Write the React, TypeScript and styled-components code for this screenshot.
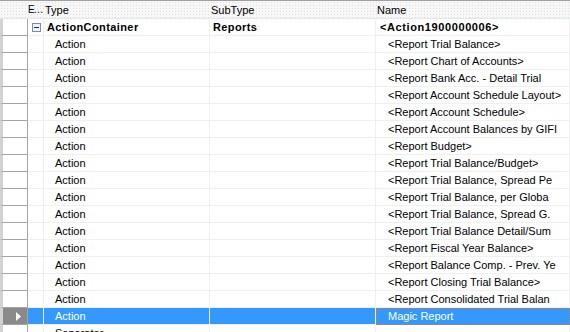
import React from 'react'
import styled, { createGlobalStyle } from 'styled-components'

const GlobalStyle = createGlobalStyle`
  html, body { margin: 0; padding: 0; background: #fff; }
  body {
    font-family: "Liberation Sans", Arial, sans-serif;
    font-size: 11px;
    color: #000;
  }
`

const COLS = '28px 16px 166px 166px 1fr'

const Grid = styled.div`
  width: 570px;
  height: 332px;
  overflow: hidden;
  box-sizing: border-box;
  border-top: 1px solid #a0a0a0;
  background: #fff;
`

const HeaderRow = styled.div`
  display: grid;
  grid-template-columns: ${COLS};
  height: 18px;
  box-sizing: border-box;
  background-color: #f7f7f7;
  background-image: radial-gradient(circle, #e0e0e0 0.7px, transparent 0.9px);
  background-size: 3px 3px;
  border-bottom: 1px solid #e2e8ee;
`

const HeaderCell = styled.div<{ $tight?: boolean }>`
  padding-left: ${p => (p.$tight ? 0 : 1)}px;
  line-height: 18px;
  white-space: nowrap;
  overflow: hidden;
  color: #000;
  font-size: ${p => (p.$tight ? 10 : 11)}px;
  letter-spacing: ${p => (p.$tight ? -1.2 : 0)}px;
`

const Row = styled.div<{ $selected?: boolean }>`
  display: grid;
  grid-template-columns: ${COLS};
  height: 17px;
  background: ${p => (p.$selected ? '#3399ff' : '#fff')};
  color: ${p => (p.$selected ? '#fff' : '#000')};
`

const RowHead = styled.div<{ $current?: boolean }>`
  box-sizing: border-box;
  border-left: 3px solid #d2d2d2;
  border-right: 1px solid #a5a5a5;
  border-bottom: 1px solid #a5a5a5;
  background: ${p => (p.$current ? '#8a8a8a' : '#fff')};
  display: flex;
  align-items: center;
  padding-left: 13px;
`

const Cell = styled.div<{ $indent?: number; $bold?: boolean; $focus?: boolean; $spacing?: number }>`
  box-sizing: border-box;
  border-right: 1px solid #f0f0f0;
  border-bottom: 1px solid #f0f0f0;
  ${p => (p.$focus ? 'border: 1px dotted #ee7411;' : '')}
  padding-left: ${p => p.$indent ?? 3}px;
  line-height: ${p => (p.$focus ? 15 : 16)}px;
  font-weight: ${p => (p.$bold ? 700 : 400)};
  letter-spacing: ${p => p.$spacing ?? 0}px;
  white-space: nowrap;
  overflow: hidden;
  display: flex;
  align-items: center;
`

const Toggle = styled.svg`
  display: block;
  margin-left: 4px;
  margin-top: 1px;
`

const Arrow = styled.svg`
  display: block;
`

const MinusBox = () => (
  <Toggle width="9" height="9" viewBox="0 0 9 9">
    <rect x="0.5" y="0.5" width="8" height="8" fill="#fff" stroke="#7a8fa6" />
    <rect x="1" y="1" width="7" height="7" fill="#eef1f5" />
    <rect x="2" y="4" width="5" height="1" fill="#1f2a44" />
  </Toggle>
)

const names = [
  '<Report Trial Balance>',
  '<Report Chart of Accounts>',
  '<Report Bank Acc. - Detail Trial',
  '<Report Account Schedule Layout>',
  '<Report Account Schedule>',
  '<Report Account Balances by GIFI',
  '<Report Budget>',
  '<Report Trial Balance/Budget>',
  '<Report Trial Balance, Spread Pe',
  '<Report Trial Balance, per Globa',
  '<Report Trial Balance, Spread G.',
  '<Report Trial Balance Detail/Sum',
  '<Report Fiscal Year Balance>',
  '<Report Balance Comp. - Prev. Ye',
  '<Report Closing Trial Balance>',
  '<Report Consolidated Trial Balan',
]

export default function App() {
  return (
    <>
      <GlobalStyle />
      <Grid>
        <HeaderRow>
          <HeaderCell />
          <HeaderCell $tight>E…</HeaderCell>
          <HeaderCell>Type</HeaderCell>
          <HeaderCell>SubType</HeaderCell>
          <HeaderCell>Name</HeaderCell>
        </HeaderRow>

        <Row>
          <RowHead />
          <Cell $indent={0}><MinusBox /></Cell>
          <Cell $bold $spacing={0.4}>ActionContainer</Cell>
          <Cell $bold $spacing={0.4}>Reports</Cell>
          <Cell $bold $indent={4} $spacing={0.6}>&lt;Action1900000006&gt;</Cell>
        </Row>

        {names.map(n => (
          <Row key={n}>
            <RowHead />
            <Cell />
            <Cell $indent={11}>Action</Cell>
            <Cell />
            <Cell $indent={12}>{n}</Cell>
          </Row>
        ))}

        <Row $selected>
          <RowHead $current>
            <Arrow width="5" height="9" viewBox="0 0 5 9">
              <path d="M0 0 L5 4.5 L0 9 Z" fill="#fff" />
            </Arrow>
          </RowHead>
          <Cell />
          <Cell $indent={11}>Action</Cell>
          <Cell />
          <Cell $indent={11} $focus>Magic Report</Cell>
        </Row>

        <Row>
          <RowHead />
          <Cell />
          <Cell $indent={11}>Separator</Cell>
          <Cell />
          <Cell />
        </Row>
      </Grid>
    </>
  )
}
